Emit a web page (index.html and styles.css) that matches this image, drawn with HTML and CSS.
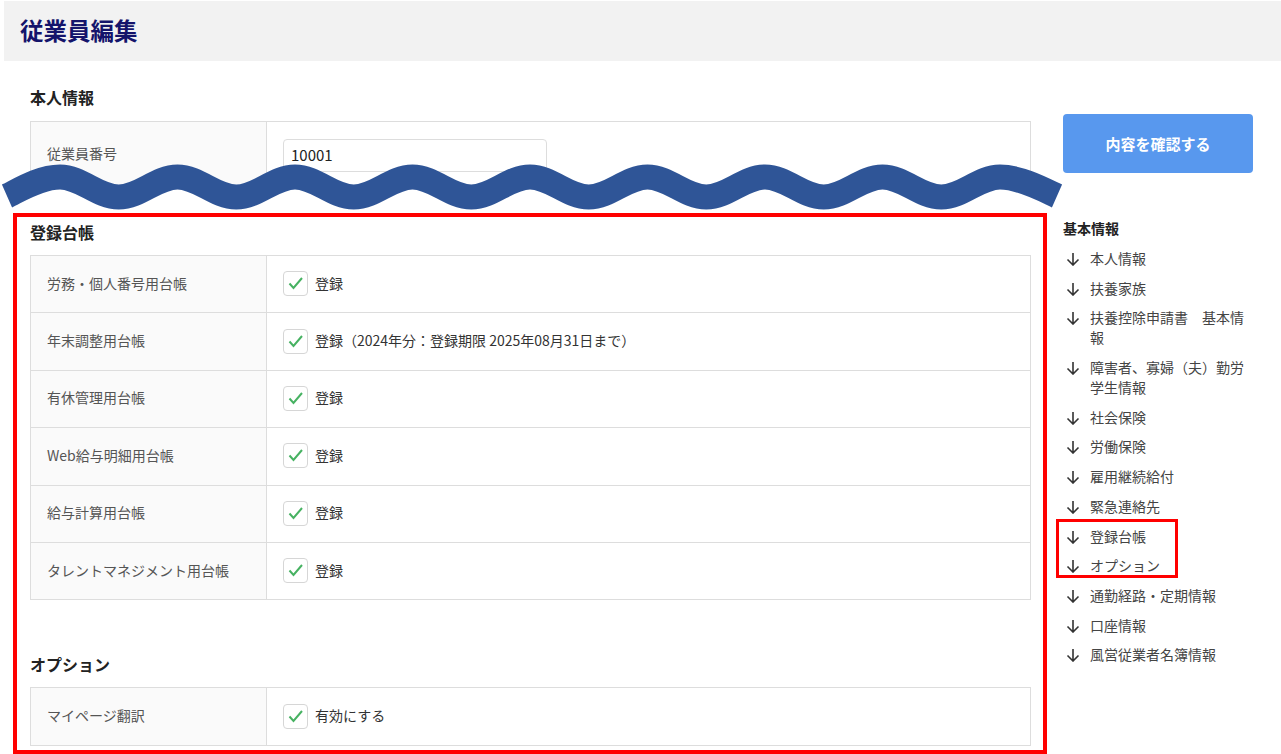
FILE: index.html
```html
<!DOCTYPE html>
<html lang="ja">
<head>
  <meta charset="UTF-8">
  <title>従業員編集</title>
  <link rel="stylesheet" href="styles.css">
</head>
<body>

  <!-- ヘッダー -->
  <header class="page-header">
    <h1>従業員編集</h1>
  </header>

  <div class="layout">
    <!-- 省略を示す波線 -->
    <svg class="wave" width="1070" height="80" viewBox="0 150 1070 80" aria-hidden="true">
      <path d="M 7 196 C 16 192 38.6 177 60 177
               C 81.4 177 97.35 197 118.75 197 C 140.15 197 156.1 177 177.5 177
               C 198.9 177 214.85 197 236.25 197 C 257.65 197 273.6 177 295 177
               C 316.4 177 332.35 197 353.75 197 C 375.15 197 391.1 177 412.5 177
               C 433.9 177 449.85 197 471.25 197 C 492.65 197 508.6 177 530 177
               C 551.4 177 567.35 197 588.75 197 C 610.15 197 626.1 177 647.5 177
               C 668.9 177 684.85 197 706.25 197 C 727.65 197 743.6 177 765 177
               C 786.4 177 802.35 197 823.75 197 C 845.15 197 861.1 177 882.5 177
               C 903.9 177 919.85 197 941.25 197 C 962.65 197 978.6 177 1000 177
               C 1021.4 177 1048 192 1057 196"
            fill="none" stroke="#2f5597" stroke-width="25"/>
    </svg>

    <!-- 内容 -->
    <div class="main">
      <section class="intro">
        <h2 class="section-title">本人情報</h2>
        <div class="form-table">
          <div class="form-row form-row-input">
            <div class="form-label">従業員番号</div>
            <div class="form-value"><input type="text" class="text-input" value="10001"></div>
          </div>
        </div>
      </section>

      <div class="focus-box">
        <section>
          <h2 class="section-title">登録台帳</h2>
          <div class="form-table">
            <div class="form-row">
              <div class="form-label">労務・個人番号用台帳</div>
              <div class="form-value"><span class="checkbox"><svg width="25" height="25" viewBox="0 0 25 25"><path d="M6.5 12.5 L10.5 17 L19 7" fill="none" stroke="#47b262" stroke-width="2"/></svg></span>登録</div>
            </div>
            <div class="form-row">
              <div class="form-label">年末調整用台帳</div>
              <div class="form-value"><span class="checkbox"><svg width="25" height="25" viewBox="0 0 25 25"><path d="M6.5 12.5 L10.5 17 L19 7" fill="none" stroke="#47b262" stroke-width="2"/></svg></span>登録（2024年分：登録期限 2025年08月31日まで）</div>
            </div>
            <div class="form-row">
              <div class="form-label">有休管理用台帳</div>
              <div class="form-value"><span class="checkbox"><svg width="25" height="25" viewBox="0 0 25 25"><path d="M6.5 12.5 L10.5 17 L19 7" fill="none" stroke="#47b262" stroke-width="2"/></svg></span>登録</div>
            </div>
            <div class="form-row">
              <div class="form-label">Web給与明細用台帳</div>
              <div class="form-value"><span class="checkbox"><svg width="25" height="25" viewBox="0 0 25 25"><path d="M6.5 12.5 L10.5 17 L19 7" fill="none" stroke="#47b262" stroke-width="2"/></svg></span>登録</div>
            </div>
            <div class="form-row">
              <div class="form-label">給与計算用台帳</div>
              <div class="form-value"><span class="checkbox"><svg width="25" height="25" viewBox="0 0 25 25"><path d="M6.5 12.5 L10.5 17 L19 7" fill="none" stroke="#47b262" stroke-width="2"/></svg></span>登録</div>
            </div>
            <div class="form-row">
              <div class="form-label">タレントマネジメント用台帳</div>
              <div class="form-value"><span class="checkbox"><svg width="25" height="25" viewBox="0 0 25 25"><path d="M6.5 12.5 L10.5 17 L19 7" fill="none" stroke="#47b262" stroke-width="2"/></svg></span>登録</div>
            </div>
          </div>
        </section>

        <section class="option-section">
          <h2 class="section-title">オプション</h2>
          <div class="form-table">
            <div class="form-row">
              <div class="form-label">マイページ翻訳</div>
              <div class="form-value"><span class="checkbox"><svg width="25" height="25" viewBox="0 0 25 25"><path d="M6.5 12.5 L10.5 17 L19 7" fill="none" stroke="#47b262" stroke-width="2"/></svg></span>有効にする</div>
            </div>
          </div>
        </section>
      </div>
    </div>

    <!-- サイドバー -->
    <aside class="sidebar">
      <button class="confirm-btn">内容を確認する</button>
      <h3 class="toc-title">基本情報</h3>
      <ul class="toc">
        <li><svg class="arrow" width="14" height="14" viewBox="0 0 14 14"><path d="M7 1 V13 M1.5 7.5 L7 13 L12.5 7.5" fill="none" stroke="#333" stroke-width="1.6"/></svg><span>本人情報</span></li>
        <li><svg class="arrow" width="14" height="14" viewBox="0 0 14 14"><path d="M7 1 V13 M1.5 7.5 L7 13 L12.5 7.5" fill="none" stroke="#333" stroke-width="1.6"/></svg><span>扶養家族</span></li>
        <li><svg class="arrow" width="14" height="14" viewBox="0 0 14 14"><path d="M7 1 V13 M1.5 7.5 L7 13 L12.5 7.5" fill="none" stroke="#333" stroke-width="1.6"/></svg><span>扶養控除申請書　基本情報</span></li>
        <li><svg class="arrow" width="14" height="14" viewBox="0 0 14 14"><path d="M7 1 V13 M1.5 7.5 L7 13 L12.5 7.5" fill="none" stroke="#333" stroke-width="1.6"/></svg><span>障害者、寡婦（夫）勤労学生情報</span></li>
        <li><svg class="arrow" width="14" height="14" viewBox="0 0 14 14"><path d="M7 1 V13 M1.5 7.5 L7 13 L12.5 7.5" fill="none" stroke="#333" stroke-width="1.6"/></svg><span>社会保険</span></li>
        <li><svg class="arrow" width="14" height="14" viewBox="0 0 14 14"><path d="M7 1 V13 M1.5 7.5 L7 13 L12.5 7.5" fill="none" stroke="#333" stroke-width="1.6"/></svg><span>労働保険</span></li>
        <li><svg class="arrow" width="14" height="14" viewBox="0 0 14 14"><path d="M7 1 V13 M1.5 7.5 L7 13 L12.5 7.5" fill="none" stroke="#333" stroke-width="1.6"/></svg><span>雇用継続給付</span></li>
        <li><svg class="arrow" width="14" height="14" viewBox="0 0 14 14"><path d="M7 1 V13 M1.5 7.5 L7 13 L12.5 7.5" fill="none" stroke="#333" stroke-width="1.6"/></svg><span>緊急連絡先</span></li>
        <li class="toc-group">
          <ul>
            <li><svg class="arrow" width="14" height="14" viewBox="0 0 14 14"><path d="M7 1 V13 M1.5 7.5 L7 13 L12.5 7.5" fill="none" stroke="#333" stroke-width="1.6"/></svg><span>登録台帳</span></li>
            <li><svg class="arrow" width="14" height="14" viewBox="0 0 14 14"><path d="M7 1 V13 M1.5 7.5 L7 13 L12.5 7.5" fill="none" stroke="#333" stroke-width="1.6"/></svg><span>オプション</span></li>
          </ul>
        </li>
        <li><svg class="arrow" width="14" height="14" viewBox="0 0 14 14"><path d="M7 1 V13 M1.5 7.5 L7 13 L12.5 7.5" fill="none" stroke="#333" stroke-width="1.6"/></svg><span>通勤経路・定期情報</span></li>
        <li><svg class="arrow" width="14" height="14" viewBox="0 0 14 14"><path d="M7 1 V13 M1.5 7.5 L7 13 L12.5 7.5" fill="none" stroke="#333" stroke-width="1.6"/></svg><span>口座情報</span></li>
        <li><svg class="arrow" width="14" height="14" viewBox="0 0 14 14"><path d="M7 1 V13 M1.5 7.5 L7 13 L12.5 7.5" fill="none" stroke="#333" stroke-width="1.6"/></svg><span>風営従業者名簿情報</span></li>
      </ul>
    </aside>
  </div>

</body>
</html>
```

FILE: styles.css
```css
body {
  margin: 0;
  font-family: "Noto Sans CJK JP", "Noto Sans", sans-serif;
  color: #333;
  background: #fff;
  overflow: hidden;
}

/* ヘッダー */
.page-header {
  margin: 1px 0 0 4px;
  height: 60px;
  background-color: #f2f2f2;
}

.page-header h1 {
  margin: 0;
  padding-left: 16px;
  line-height: 58px;
  font-size: 23.5px;
  font-weight: bold;
  color: #14146b;
}

.layout {
  position: relative;
  display: flex;
  gap: 16px;
  padding-left: 13px;
}

.wave {
  position: absolute;
  left: 0;
  top: 89px;
  z-index: 2;
  pointer-events: none;
}

/* 内容 */
.main {
  width: 1034px;
}

.intro {
  height: 127px;
  box-sizing: border-box;
  padding: 26px 16px 0 17px;
  overflow: hidden;
}

.section-title {
  margin: 0 0 14px;
  font-size: 16px;
  line-height: 20px;
  font-weight: bold;
  color: #222;
}

.focus-box {
  margin-top: 25px;
  border: 4px solid #ff0000;
  padding: 5px 12px 4px 13px;
}

.focus-box .section-title {
  margin-bottom: 13px;
}

.option-section {
  margin-top: 54px;
}

.option-section .section-title {
  margin-bottom: 13px;
}

.form-table {
  border: 1px solid #ddd;
  border-bottom: none;
}

.form-row {
  display: grid;
  grid-template-columns: 236px 1fr;
  height: 57.4px;
  box-sizing: border-box;
  border-bottom: 1px solid #ddd;
}

.form-row-input {
  height: 66px;
}

.form-label {
  display: flex;
  align-items: center;
  padding: 0 0 3px 16px;
  background-color: #fafafa;
  border-right: 1px solid #ddd;
  font-size: 14px;
  color: #555;
}

.form-value {
  display: flex;
  align-items: center;
  padding: 0 0 3px 16px;
  font-size: 14px;
  color: #333;
}

.form-row-input .form-value {
  align-items: flex-start;
  padding-top: 17px;
}

.text-input {
  width: 264px;
  height: 33px;
  box-sizing: border-box;
  border: 1px solid #ddd;
  border-radius: 4px;
  padding: 0 7px 2px;
  font-family: inherit;
  font-size: 15px;
  color: #222;
}

.checkbox {
  display: inline-flex;
  width: 25px;
  height: 25px;
  box-sizing: border-box;
  border: 1px solid #d6d6d6;
  border-radius: 4px;
  margin: 2px 7px 0 0;
  background: #fff;
}

.checkbox svg {
  margin: -1px;
}

/* サイドバー */
.sidebar {
  width: 190px;
  padding-top: 53px;
}

.confirm-btn {
  display: block;
  width: 190px;
  height: 59px;
  border: none;
  border-radius: 4px;
  background-color: #5898ee;
  color: #fff;
  font-family: inherit;
  font-size: 15px;
  font-weight: bold;
  padding-bottom: 2px;
}

.toc-title {
  margin: 45px 0 10px;
  font-size: 14px;
  line-height: 20px;
  font-weight: bold;
  color: #222;
}

.toc,
.toc-group ul {
  list-style: none;
  margin: 0;
  padding: 0;
  display: flex;
  flex-direction: column;
  gap: 9.7px;
}

.toc li {
  display: flex;
  align-items: flex-start;
  font-size: 14px;
  line-height: 20px;
  color: #444;
}

.toc .arrow {
  flex: none;
  margin: 4px 10px 0 3px;
}

.toc-group {
  position: relative;
}

.toc-group ul {
  width: 100%;
}

.toc-group::after {
  content: "";
  position: absolute;
  left: -7px;
  top: -7px;
  bottom: -3px;
  width: 122px;
  box-sizing: border-box;
  border: 3px solid #ff0000;
}
```
